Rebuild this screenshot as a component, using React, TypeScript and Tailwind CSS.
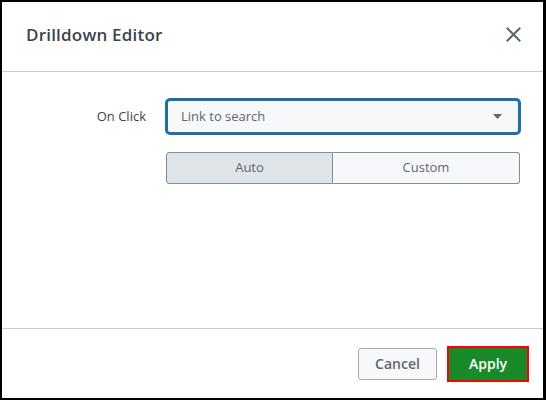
import React from "react";

export default function App() {
  return (
    <div
      className="w-[546px] h-[400px] bg-white border-black border-t-2 border-l-2 border-b-2 border-r-[3px] flex flex-col box-border"
      style={{ fontFamily: '"Open Sans", "Liberation Sans", sans-serif' }}
    >
      <div className="h-[70px] shrink-0 border-b border-[#c3cbd4] flex items-center justify-between pl-[24px] pr-[22px] pb-[5px]">
        <div className="text-[17px] font-semibold text-[#3c444d] tracking-[0.2px] leading-none">Drilldown Editor</div>
        <svg width="15" height="15" viewBox="0 0 15 15" className="text-[#5c6773]">
          <path d="M1.5 1.5 L13.5 13.5 M13.5 1.5 L1.5 13.5" stroke="currentColor" strokeWidth="2" strokeLinecap="square" />
        </svg>
      </div>
      <div className="flex-1 pt-[26px]">
        <div className="flex items-center">
          <div className="w-[144px] text-right text-[13px] text-[#3c444d]">On Click</div>
          <div className="ml-[19px] w-[356px] h-[37px] border-[3px] border-[#1f6fa6] rounded-[5px] bg-[#f7f8fa] flex items-center justify-between pl-[13px] pr-[16px] box-border">
            <span className="text-[13px] text-[#5c6773]">Link to search</span>
            <svg width="9" height="6" viewBox="0 0 9 6">
              <path d="M0 0 L9 0 L4.5 5 Z" fill="#5c6773" />
            </svg>
          </div>
        </div>
        <div className="flex mt-[17px] ml-[164px] w-[354px] h-[32px]">
          <div className="w-[167px] h-full border border-[#818d99] rounded-l-[3px] bg-[#dfe4e8] flex items-center justify-center text-[13px] text-[#5c6773] box-border">
            Auto
          </div>
          <div className="flex-1 h-full border border-l-0 border-[#818d99] rounded-r-[3px] bg-[#f7f8fa] flex items-center justify-center text-[13px] text-[#5c6773] box-border">
            Custom
          </div>
        </div>
      </div>
      <div className="h-[70px] shrink-0 border-t border-[#c3cbd4] flex items-center justify-end pr-[14px] gap-[10px]">
        <button className="w-[79px] h-[32px] border border-[#a2abb4] rounded-[3px] bg-[#f7f8fa] text-[14px] font-semibold text-[#5c6773] box-border">
          Cancel
        </button>
        <button className="w-[82px] h-[36px] border-2 border-[#ff0000] bg-[#1a8929] text-[14px] font-semibold text-white box-border">
          Apply
        </button>
      </div>
    </div>
  );
}
